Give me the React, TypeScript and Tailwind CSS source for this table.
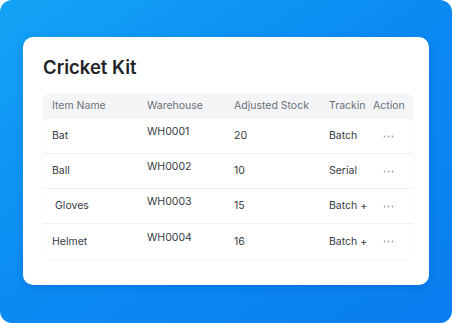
const rows = [
  { name: "Bat", wh: "WH0001", stock: "20", tracking: "Batch" },
  { name: "Ball", wh: "WH0002", stock: "10", tracking: "Serial" },
  { name: "Gloves", wh: "WH0003", stock: "15", tracking: "Batch +" },
  { name: "Helmet", wh: "WH0004", stock: "16", tracking: "Batch +" },
]

function Dots() {
  return (
    <svg width="11" height="3" viewBox="0 0 11 3" className="text-[#9aa0a8]">
      <circle cx="1.5" cy="1.5" r="0.9" fill="currentColor" />
      <circle cx="5.5" cy="1.5" r="0.9" fill="currentColor" />
      <circle cx="9.5" cy="1.5" r="0.9" fill="currentColor" />
    </svg>
  )
}

export default function App() {
  return (
    <div
      className="w-[452px] h-[323px] rounded-[12px] bg-gradient-to-br from-[#14a3f6] via-[#0b8af2] to-[#0a7df0] pt-[37px] pl-[23px]"
      style={{ fontFamily: "Inter, 'Noto Sans', sans-serif" }}
    >
      <div className="w-[406px] h-[248px] rounded-[10px] bg-white shadow-[0_2px_8px_rgba(0,40,120,0.18)] pt-[17px] px-[20px]">
        <h1 className="text-[18.5px] leading-[26px] font-semibold text-[#1f2328]">Cricket Kit</h1>
        <div className="mt-[13px] w-[370px] rounded-[8px] shadow-[0_1px_3px_rgba(0,0,0,0.04)]">
          <div className="h-[26px] rounded-t-[8px] bg-[#f3f5f7] flex items-center text-[10.5px] text-[#6b7079]">
            <div className="w-[95px] pl-[9px]">Item Name</div>
            <div className="w-[87px] pl-[9px]">Warehouse</div>
            <div className="w-[95px] pl-[9px]">Adjusted Stock</div>
            <div className="w-[44px] pl-[9px] whitespace-nowrap">Trackin</div>
            <div className="flex-1 pl-[9px]">Action</div>
          </div>
          {rows.map((r) => (
            <div
              key={r.name}
              className="h-[35px] flex items-center text-[10.5px] text-[#363b42] bg-white border-b border-[#eef0f2] last:border-b-0"
            >
              <div className={r.name === "Gloves" ? "w-[95px] pl-[12px]" : "w-[95px] pl-[9px]"}>{r.name}</div>
              <div className="w-[87px] pl-[9px] -mt-[8px]">{r.wh}</div>
              <div className="w-[95px] pl-[9px]">{r.stock}</div>
              <div className="w-[44px] pl-[9px] whitespace-nowrap">{r.tracking}</div>
              <div className="flex-1 flex pl-[19px]">
                <Dots />
              </div>
            </div>
          ))}
        </div>
      </div>
    </div>
  )
}
